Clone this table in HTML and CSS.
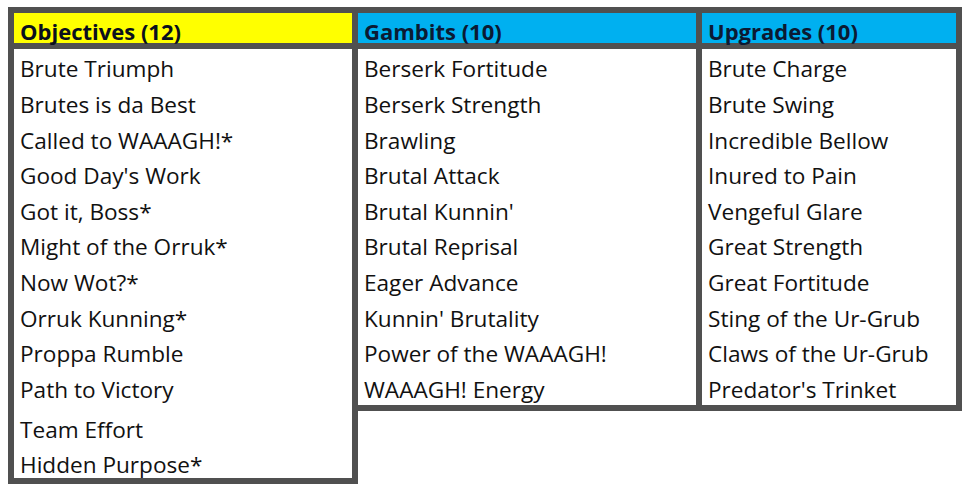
FILE: index.html
```html
<!DOCTYPE html>
<html>
<head>
<meta charset="utf-8">
<link rel="stylesheet" href="styles.css">
</head>
<body>
<div class="board">
  <div class="col col-wide">
    <div class="head head-yellow">Objectives (12)</div>
    <ul class="list">
      <li>Brute Triumph</li>
      <li>Brutes is da Best</li>
      <li>Called to WAAAGH!*</li>
      <li>Good Day's Work</li>
      <li>Got it, Boss*</li>
      <li>Might of the Orruk*</li>
      <li>Now Wot?*</li>
      <li>Orruk Kunning*</li>
      <li>Proppa Rumble</li>
      <li>Path to Victory</li>
      <li class="tall">Team Effort</li>
      <li class="last">Hidden Purpose*</li>
    </ul>
  </div>
  <div class="col col-wide">
    <div class="head head-blue">Gambits (10)</div>
    <ul class="list">
      <li>Berserk Fortitude</li>
      <li>Berserk Strength</li>
      <li>Brawling</li>
      <li>Brutal Attack</li>
      <li>Brutal Kunnin'</li>
      <li>Brutal Reprisal</li>
      <li>Eager Advance</li>
      <li>Kunnin' Brutality</li>
      <li>Power of the WAAAGH!</li>
      <li>WAAAGH! Energy</li>
    </ul>
  </div>
  <div class="col col-narrow">
    <div class="head head-blue">Upgrades (10)</div>
    <ul class="list">
      <li>Brute Charge</li>
      <li>Brute Swing</li>
      <li>Incredible Bellow</li>
      <li>Inured to Pain</li>
      <li>Vengeful Glare</li>
      <li>Great Strength</li>
      <li>Great Fortitude</li>
      <li>Sting of the Ur-Grub</li>
      <li>Claws of the Ur-Grub</li>
      <li>Predator's Trinket</li>
    </ul>
  </div>
</div>
</body>
</html>
```

FILE: styles.css
```css
html, body {
  margin: 0;
  padding: 0;
  background: #ffffff;
}

body {
  padding: 7px 0 0 8px;
  font-family: "Open Sans", "Noto Sans", sans-serif;
  color: #111111;
}

.board {
  display: flex;
  align-items: flex-start;
}

.col {
  border: 6px solid #505050;
  background: #ffffff;
}

.col + .col {
  margin-left: -6px;
}

.col-wide {
  width: 338px;
}

.col-narrow {
  width: 254px;
}

.head {
  padding: 6px 0 0 6px;
  line-height: 24px;
  font-size: 22px;
  font-weight: 700;
  border-bottom: 6px solid #505050;
  white-space: nowrap;
  color: #0a0f1e;
}

.head-yellow {
  background: #ffff00;
}

.head-blue {
  background: #00b0f0;
  color: #0b1a33;
}

.list {
  list-style: none;
  margin: 0;
  padding: 0;
}

.list li {
  padding: 5.4px 0 0 6px;
  line-height: 30.2px;
  font-size: 22.6px;
  white-space: nowrap;
}

.list li.tall {
  padding-top: 11px;
  line-height: 27px;
}

.list li.last {
  padding-top: 9.4px;
  line-height: 25.2px;
}
```
